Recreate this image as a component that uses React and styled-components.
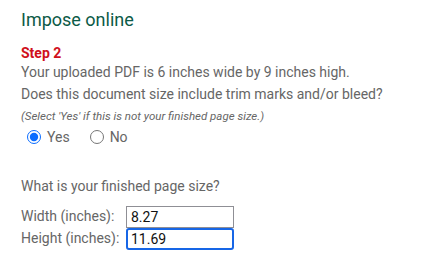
import React, { useState } from "react";
import styled, { createGlobalStyle } from "styled-components";

const GlobalStyle = createGlobalStyle`
  html, body {
    margin: 0;
    padding: 0;
    background: #ffffff;
  }
  body {
    font-family: Roboto, "Liberation Sans", Arial, sans-serif;
    color: #666666;
  }
`;

const Page = styled.div`
  padding: 9px 21px 0 21px;
  width: 442px;
  box-sizing: border-box;
`;

const Title = styled.h1`
  margin: 0 0 14px 0;
  font-size: 18px;
  font-weight: 400;
  line-height: 22px;
  color: #0c5a47;
`;

const StepLabel = styled.div`
  font-size: 14px;
  font-weight: 700;
  line-height: 16px;
  color: #d0101b;
  margin-bottom: 1px;
`;

const Line = styled.p`
  margin: 0;
  font-size: 14px;
  line-height: 21.5px;
  color: #666666;
`;

const Note = styled.p`
  margin: 2px 0 0 0;
  font-size: 11.5px;
  font-style: italic;
  line-height: 18px;
  color: #666666;
`;

const RadioRow = styled.div`
  display: flex;
  align-items: center;
  gap: 20px;
  padding-left: 6px;
  height: 22px;
  margin-top: 1px;
`;

const RadioLabel = styled.label`
  display: flex;
  align-items: center;
  gap: 6px;
  font-size: 14px;
  color: #666666;
`;

const Radio = styled.input`
  margin: 0;
  width: 14px;
  height: 14px;
  accent-color: #0a6cff;
`;

const Question = styled(Line)`
  margin-top: 28px;
  margin-bottom: 8px;
`;

const FieldGrid = styled.div`
  display: grid;
  grid-template-columns: 105px 108px;
  align-items: center;
`;

const FieldLabel = styled.label`
  font-size: 14px;
  color: #666666;
  line-height: 21px;
`;

const Field = styled.input`
  box-sizing: border-box;
  width: 108px;
  height: 22px;
  margin: 0;
  padding: 1px 4px;
  font-family: Roboto, "Liberation Sans", Arial, sans-serif;
  font-size: 14px;
  color: #111111;
  background: #ffffff;
  outline: none;
  border: ${(p) => (p.$focused ? "2px solid #1766e6" : "1px solid #8f8f95")};
  border-radius: ${(p) => (p.$focused ? "3px" : "0")};
  padding-left: ${(p) => (p.$focused ? "3px" : "4px")};
`;

export default function App() {
  const [trim, setTrim] = useState("yes");
  const [width, setWidth] = useState("8.27");
  const [height, setHeight] = useState("11.69");

  return (
    <>
      <GlobalStyle />
      <Page>
        <Title>Impose online</Title>
        <StepLabel>Step 2</StepLabel>
        <Line>Your uploaded PDF is 6 inches wide by 9 inches high.</Line>
        <Line>Does this document size include trim marks and/or bleed?</Line>
        <Note>(Select 'Yes' if this is not your finished page size.)</Note>
        <RadioRow>
          <RadioLabel>
            <Radio
              type="radio"
              name="trim"
              checked={trim === "yes"}
              onChange={() => setTrim("yes")}
            />
            Yes
          </RadioLabel>
          <RadioLabel>
            <Radio
              type="radio"
              name="trim"
              checked={trim === "no"}
              onChange={() => setTrim("no")}
            />
            No
          </RadioLabel>
        </RadioRow>
        <Question>What is your finished page size?</Question>
        <FieldGrid>
          <FieldLabel htmlFor="w">Width (inches):</FieldLabel>
          <Field id="w" value={width} onChange={(e) => setWidth(e.target.value)} />
          <FieldLabel htmlFor="h">Height (inches):</FieldLabel>
          <Field
            id="h"
            $focused
            value={height}
            onChange={(e) => setHeight(e.target.value)}
          />
        </FieldGrid>
      </Page>
    </>
  );
}
